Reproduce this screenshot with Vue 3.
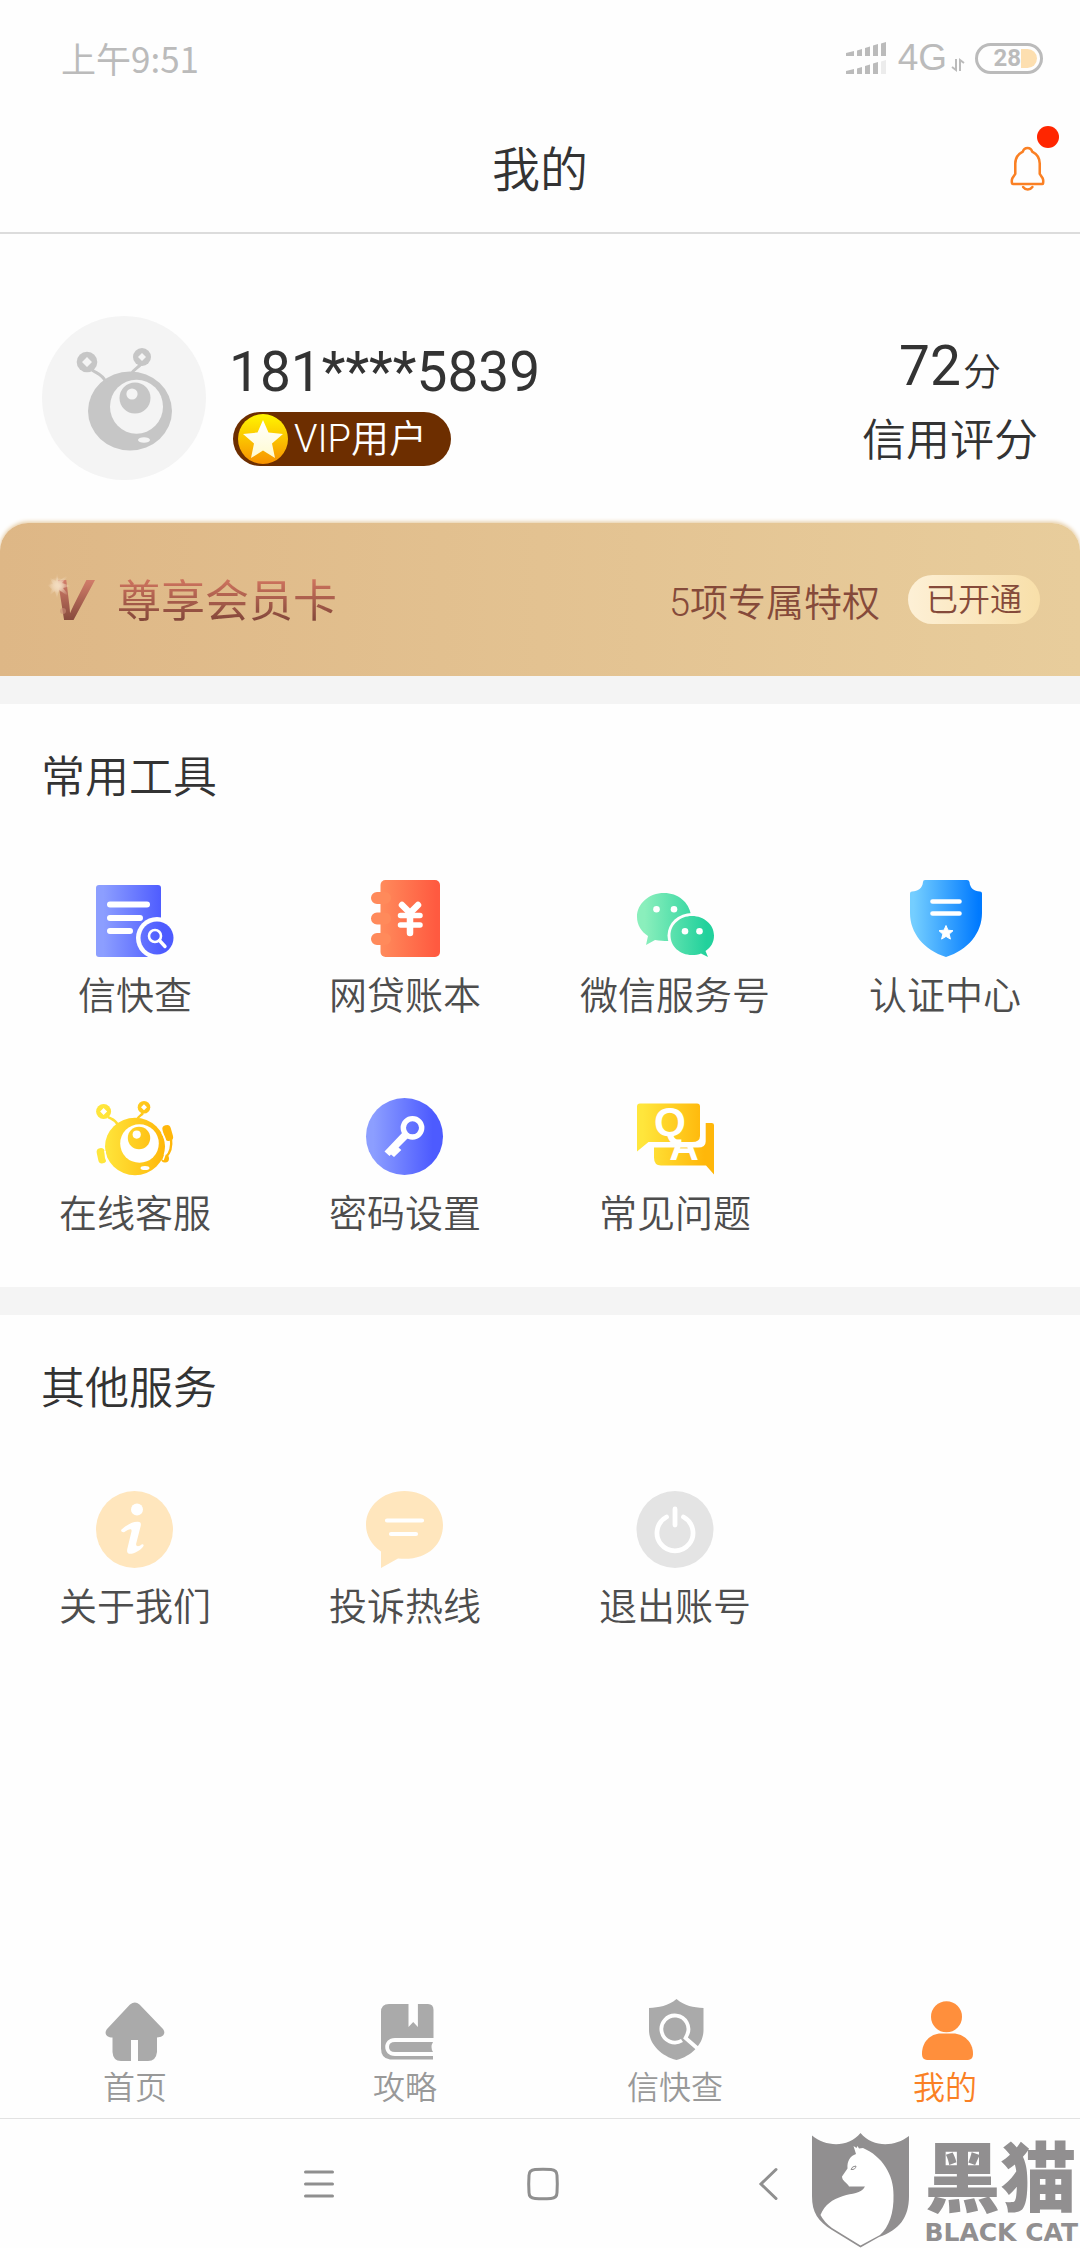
<script setup>
import { ref } from 'vue'

const account = '181****5839'
const score = 72
const activeTab = ref('mine')
</script>

<template>
  <div class="page">
    <div class="status">
      <span class="time">上午9:51</span>
      <div class="status-right">
        <svg class="signal" width="40" height="32" viewBox="0 0 40 32" fill="#bbb">
          <path d="M0 11l8-2v5H0zM11 8.500l5-1.500v7h-5zM19 6l5-1.500V14h-5zM27 3.500L32 2v12h-5zM35 1.500L40 0v14h-5z" />
          <path d="M0 29l8-2v5H0zM11 26.500l5-1.500v7h-5zM19 24l5-1.500V32h-5zM27 21.500L32 20v12h-5z" />
          <path d="M35 19.500l5-1.500v14h-5z" fill="#ececec" />
        </svg>
        <span class="net">4G</span>
        <svg class="updown" width="14" height="12" viewBox="0 0 14 12" fill="none" stroke="#bbb" stroke-width="2">
          <path d="M5 0v11L1 8M9 12V1l4 3" />
        </svg>
        <span class="battery"><b>28</b><i></i></span>
      </div>
    </div>

    <header class="header">
      <h1>我的</h1>
      <button class="bell" aria-label="消息">
        <svg width="36" height="45" viewBox="0 0 36 46" fill="none" stroke="#fa8024" stroke-width="2.600" stroke-linejoin="round" stroke-linecap="round">
          <path d="M17.500 2c-2.800 0-4.200 1.500-4.800 3.800C7.500 8.500 5 12.500 5 18v10.500L2 33c-.8 1.500-.7 3-.4 5 .1.600.5.800 1 .8h29.800c.5 0 .9-.2 1-.8.300-2 .4-3.500-.4-5l-3-4.500V18c0-5.500-2.500-9.500-7.700-12.200C21.700 3.500 20.300 2 17.500 2z" />
          <path d="M13 42c2.500 3.400 7 3.400 9.500 0" />
        </svg>
        <span class="dot"></span>
      </button>
    </header>

    <main class="main">
      <section class="profile">
        <svg class="avatar" width="164" height="164" viewBox="0 0 164 164">
          <circle cx="82" cy="82" r="82" fill="#f4f4f4" />
          <g fill="#c6c6c6">
            <ellipse cx="88" cy="95" rx="42" ry="39.500" />
            <circle cx="45" cy="46" r="10.300" />
            <circle cx="100" cy="41" r="9" />
            <path d="M50 54c6 4 10 4 14 12M99 48c-3 4-7 5-10 10" fill="none" stroke="#c6c6c6" stroke-width="3" />
          </g>
          <g fill="#f4f4f4">
            <path d="M45 41l5 5-5 5-5-5zM100 37l4 4-4 4-4-4z" />
            <ellipse cx="94.500" cy="90.700" rx="26.500" ry="27" />
            <ellipse cx="102" cy="124" rx="6" ry="2.800" />
          </g>
          <circle cx="93" cy="82" r="15.500" fill="#c6c6c6" />
          <circle cx="90" cy="78" r="5.600" fill="#f4f4f4" />
        </svg>
        <div class="who">
          <div class="phone">{{ account }}</div>
          <div class="vip">
            <svg width="50" height="50" viewBox="0 0 50 50">
              <defs>
                <linearGradient id="coin" x1="0" y1="0" x2="0" y2="1"><stop offset="0" stop-color="#fff600" /><stop offset="1" stop-color="#f79100" /></linearGradient>
                <linearGradient id="coinStar" x1="0" y1="0" x2="0" y2="1"><stop offset="0" stop-color="#fff" /><stop offset="1" stop-color="#fffbd0" /></linearGradient>
              </defs>
              <circle cx="25" cy="25" r="25" fill="url(#coin)" />
              <path d="M25 6l5.500 12.500L45 20 34 29.500 37 44 25 36.500 13 44l3-14.500L5 20l14.500-1.500z" fill="url(#coinStar)" />
            </svg>
            <span>VIP用户</span>
          </div>
        </div>
        <div class="score">
          <div class="score-num">{{ score }}<small>分</small></div>
          <div class="score-label">信用评分</div>
        </div>
      </section>

      <section class="card">
        <svg class="v-logo" width="56" height="54" viewBox="0 0 56 54">
          <defs>
            <linearGradient id="vFill" x1="0" y1="0" x2="0" y2="1"><stop offset="0.200" stop-color="#d07c69" /><stop offset="0.850" stop-color="#83473a" /></linearGradient>
            <radialGradient id="spark"><stop offset="0" stop-color="#f3dcc0" /><stop offset="1" stop-color="#f3dcc0" stop-opacity="0" /></radialGradient>
          </defs>
          <text x="8" y="47" class="v-mark" fill="url(#vFill)">V</text>
          <path d="M12 0l1.500 8L26 0 17 10l9 3-8 2 8 10-12-8-2 9-2-8-7 6 4-8-5-4 6-1-4-7 7 4z" fill="url(#spark)" />
          <circle cx="12" cy="12" r="8" fill="url(#spark)" />
          <circle cx="18" cy="38" r="3" fill="#c98d78" opacity="0.600" />
        </svg>
        <strong>尊享会员卡</strong>
        <span class="perks">5项专属特权</span>
        <button class="opened">已开通</button>
      </section>

      <section class="block">
        <h2>常用工具</h2>
        <div class="grid">
          <button class="tool">
            <svg width="78" height="78" viewBox="0 0 78 78">
              <defs><linearGradient id="g1" gradientUnits="userSpaceOnUse" x1="0" y1="0" x2="74" y2="0"><stop offset="0.100" stop-color="#8c9eff" /><stop offset="0.900" stop-color="#4d5bff" /></linearGradient></defs>
              <rect x="0" y="5" width="65" height="72" rx="3" fill="url(#g1)" />
              <path d="M14 24.500h37M14 38h30M14 51h20" stroke="#fff" stroke-width="6" stroke-linecap="round" />
              <circle cx="61" cy="58" r="21" fill="#fefefe" />
              <circle cx="61" cy="58" r="16.500" fill="url(#g1)" />
              <g fill="none" stroke="#fff" stroke-width="2.600" stroke-linecap="round"><circle cx="59" cy="56" r="6" /><path d="M63.500 60.500l5.500 6" stroke-width="3.400" /></g>
            </svg>
            <span>信快查</span>
          </button>
          <button class="tool">
            <svg width="78" height="78" viewBox="0 0 78 78">
              <defs><linearGradient id="g2" gradientUnits="userSpaceOnUse" x1="5" y1="0" x2="74" y2="0"><stop offset="0.150" stop-color="#ff8a5b" /><stop offset="0.950" stop-color="#ff5a40" /></linearGradient></defs>
              <rect x="14.500" y="0" width="59.500" height="77" rx="5" fill="url(#g2)" />
              <path d="M11 18h8M11 38.500h8M11 59h8" stroke="#ff8a5b" stroke-width="12" stroke-linecap="round" />
              <path d="M36 25l8 8 8-8M44 33v20" fill="none" stroke="#fff" stroke-width="6.500" stroke-linecap="round" />
              <path d="M34.500 35.500h19.500M34.500 45h19.500" stroke="#fff" stroke-width="5.500" stroke-linecap="round" />
            </svg>
            <span>网贷账本</span>
          </button>
          <button class="tool">
            <svg width="78" height="78" viewBox="1 0 78 78">
              <defs><linearGradient id="g3" gradientUnits="userSpaceOnUse" x1="2" y1="0" x2="79" y2="0"><stop offset="0.100" stop-color="#8aefbc" /><stop offset="0.900" stop-color="#22d19c" /></linearGradient></defs>
              <path d="M29 13C14 13 2 23.500 2 37c0 8 4.500 15 11 19l-2 9 9-5c13 2 20 1 24-1L56 35C54 22 43 13 29 13z" fill="url(#g3)" />
              <ellipse cx="57" cy="55.500" rx="24.500" ry="22.500" fill="#fefefe" />
              <path d="M57 36c-12 0-21.500 8.500-21.500 19.500S45 75 57 75c3.500 0 6.500-.5 9-1.500l7 3.500-2.500-6c5.500-3.500 8.500-9 8.500-15.500C79 44.500 69 36 57 36z" fill="url(#g3)" />
              <g fill="#fff"><circle cx="21.500" cy="29.300" r="3.300" /><circle cx="39" cy="29.300" r="3.300" /><circle cx="50" cy="51.300" r="3.300" /><circle cx="64.500" cy="51.300" r="3.300" /></g>
            </svg>
            <span>微信服务号</span>
          </button>
          <button class="tool">
            <svg width="78" height="78" viewBox="0 0 78 78">
              <defs><linearGradient id="g4" gradientUnits="userSpaceOnUse" x1="4" y1="0" x2="76" y2="0"><stop offset="0.050" stop-color="#74ceff" /><stop offset="0.950" stop-color="#007aff" /></linearGradient></defs>
              <path d="M19 0h42q2 0 2.500 2c.5 6 4.500 9.500 10.500 9.500q2 0 2 2V33c0 20-14 37-36 44C18 70 4 53 4 33V13.500q0-2 2-2c6 0 10.500-3.500 11-9.500q0-2 2-2z" fill="url(#g4)" />
              <path d="M26.500 21.500h27M26.500 33.500h27" stroke="#fff" stroke-width="4.600" stroke-linecap="round" />
              <path d="M40 45.500l2 4.700 5 .5-3.800 3.400 1.200 5-4.400-2.700-4.400 2.700 1.200-5-3.800-3.400 5-.5z" fill="#fff" stroke="#fff" />
            </svg>
            <span>认证中心</span>
          </button>
          <button class="tool">
            <svg width="78" height="78" viewBox="0 0 78 78">
              <defs><linearGradient id="g5" gradientUnits="userSpaceOnUse" x1="0" y1="0" x2="77" y2="0"><stop offset="0.100" stop-color="#ffe63c" /><stop offset="0.900" stop-color="#ffb70a" /></linearGradient></defs>
              <g fill="url(#g5)">
                <ellipse cx="39" cy="48.500" rx="30" ry="28.800" />
                <circle cx="7.600" cy="13.500" r="7.500" /><circle cx="48" cy="9.300" r="6.300" />
                <rect x="1.500" y="50" width="8" height="15.500" rx="4" transform="rotate(-12 5.500 58)" />
                <rect x="67.500" y="27" width="8.500" height="16" rx="4" transform="rotate(-16 71.700 35)" />
                <circle cx="69" cy="60.500" r="4" />
              </g>
              <path d="M12 19c3 2 7 2 10 8M47 15c-2 3-5 3-7 8M75 41c1 8-1 14-5 18" fill="none" stroke="url(#g5)" stroke-width="2.400" />
              <path d="M66 35c6 9 5 17 1 27M9 53c0 6 1 9 3 13" fill="none" stroke="#fff" stroke-width="1.600" />
              <g fill="#fff">
                <path d="M7.600 10l3.500 3.500-3.500 3.500-3.500-3.500zM48 6.300l3 3-3 3-3-3z" />
                <circle cx="43.500" cy="45.500" r="19.300" /><ellipse cx="49" cy="70" rx="4.500" ry="2" />
              </g>
              <circle cx="43" cy="40" r="11.200" fill="url(#g5)" /><circle cx="40.700" cy="36.600" r="4.100" fill="#fff" />
            </svg>
            <span>在线客服</span>
          </button>
          <button class="tool">
            <svg width="78" height="78" viewBox="0 0 78 78">
              <circle cx="38.500" cy="38.500" r="38.500" fill="url(#g1)" />
              <circle cx="46.500" cy="29.800" r="9.200" fill="none" stroke="#fff" stroke-width="5.400" />
              <path d="M36.500 34.500l5.500 5.500-9.500 9.500 2.800 2.500-7.300 7-3-2.500-1.500 1.500-5-4.500z" fill="#fff" />
            </svg>
            <span>密码设置</span>
          </button>
          <button class="tool">
            <svg width="78" height="78" viewBox="1 0 78 78">
              <defs><clipPath id="lower"><rect x="19" y="49" width="60" height="30" /></clipPath></defs>
              <path d="M5 5.500h57q3 0 3 3V38q0 6-8 6H13.500L2 53.500V8.500q0-3 3-3z" fill="url(#g5)" />
              <path d="M19 49.500h44q7.700 0 7.700-6V25h6q2.300 0 2.300 2v49.500l-8-9H26q-7 0-7-8z" fill="url(#g5)" />
              <text x="35" y="38" class="qa">Q</text>
              <text x="49" y="62" class="qa" clip-path="url(#lower)">A</text>
            </svg>
            <span>常见问题</span>
          </button>
        </div>
      </section>

      <section class="block">
        <h2>其他服务</h2>
        <div class="grid">
          <button class="tool">
            <svg width="78" height="78" viewBox="0 0 78 78">
              <circle cx="38.500" cy="38.500" r="38.500" fill="#ffe6bd" />
              <circle cx="41" cy="18.500" r="6" fill="#fff" />
              <path d="M25 39C31 33.500 38 30 43 31c2 .3 2 2 1.700 4l-4.500 17.500c-.7 3.500 2.800 3.500 5.800.8q2-.3 1.500 1.700C44 60 37 63.500 33 62.700c-2.500-.7-2-3.700-1.500-5.700l4-16.500c.5-3-2-3-7.500.8q-3 .2-3-2.300z" fill="#fff" />
            </svg>
            <span>关于我们</span>
          </button>
          <button class="tool">
            <svg width="78" height="78" viewBox="0 0 78 78">
              <path d="M38.500 0C17 0 0 15 0 34c0 11 6 20 15 26.500V77l17-9.500c28 3 45-13 45-33.500C77 15 60 0 38.500 0z" fill="#ffe6bd" />
              <path d="M21 29.500h35M25 43h25" stroke="#fff" stroke-width="4.200" stroke-linecap="round" />
            </svg>
            <span>投诉热线</span>
          </button>
          <button class="tool">
            <svg width="78" height="78" viewBox="0 0 78 78">
              <circle cx="39" cy="38.500" r="38.500" fill="#e4e4e4" />
              <path d="M30.500 26a18 18 0 1 0 17 0M39 18v16" fill="none" stroke="#fff" stroke-width="4.800" stroke-linecap="round" />
            </svg>
            <span>退出账号</span>
          </button>
        </div>
      </section>
    </main>

    <nav class="tabs">
      <a href="#home" :class="{ on: activeTab === 'home' }">
        <svg width="60" height="60" viewBox="0 0 60 60" fill="#aaa">
          <path d="M25 3.500q5-4 9.500 0L58 28c3.500 5-.5 8.500-6 8.500V51q-1 9-9 9H33V39h-7v21H16q-8 0-8.500-9V36.500C2 36.500-1.500 33 2 28z" />
        </svg>
        <span>首页</span>
      </a>
      <a href="#guide" :class="{ on: activeTab === 'guide' }">
        <svg width="60" height="60" viewBox="0 0 60 60" fill="#aaa">
          <path d="M14 3h19.500v23l4.700-5 4.700 5V3H53q5.500 0 5.500 6v28H20c-13 0-13 18 0 18h38v3.500H15q-9-1-9-11V11q0-8 8-8z" />
          <path d="M20 41h38q-3 5 0 10H20q-6 0-6-5t6-5z" />
        </svg>
        <span>攻略</span>
      </a>
      <a href="#check" :class="{ on: activeTab === 'check' }">
        <svg width="60" height="60" viewBox="0 0 60 60" fill="#aaa">
          <path d="M31.500-2C23 5 14 6.500 4 7v22c0 14 12 26 27.500 30C47 55 58.500 43 58.500 29V7C48 6.500 40 5 31.500-2z" />
          <path d="M37 39.500A13.500 13.500 0 1 1 42 34l-1.500 3L52 47" fill="none" stroke="#fff" stroke-width="3.800" />
        </svg>
        <span>信快查</span>
      </a>
      <a href="#mine" :class="{ on: activeTab === 'mine' }">
        <svg width="60" height="60" viewBox="0 0 60 60" fill="#ff8f3c">
          <circle cx="31.500" cy="15.800" r="15.500" />
          <path d="M26 32.500h12c11 0 20 9 20 20 0 5-2 6.500-7 6.500H14c-5 0-7-1.500-7-6.500 0-11 8-20 19-20z" />
        </svg>
        <span>我的</span>
      </a>
    </nav>

    <div class="sysnav">
      <button aria-label="菜单">
        <svg width="32" height="32" viewBox="0 0 32 32" fill="none" stroke="#8f8f8f" stroke-width="3" stroke-linecap="round"><path d="M2.500 4h27M2.500 16h27M2.500 28h27" /></svg>
      </button>
      <button aria-label="主页">
        <svg width="32" height="32" viewBox="0 0 32 32" fill="none" stroke="#8f8f8f" stroke-width="3"><path d="M8 1.500Q16 1 24 1.500q6 .5 6 6 .6 8.500 0 17 0 5.500-6 6-8 .5-16 0-6-.5-6-6-.6-8.500 0-17 0-5.500 6-6z" /></svg>
      </button>
      <button aria-label="返回">
        <svg width="32" height="32" viewBox="0 0 32 32" fill="none" stroke="#8f8f8f" stroke-width="3" stroke-linecap="round"><path d="M25 1.500L10 16l15 14.500" /></svg>
      </button>
      <div class="mark">
        <svg width="97" height="115" viewBox="0 0 97 115">
          <path d="M0 2.500C14 14 36 15 48.500 0 61 15 83 14 97 3v60c0 22-10 34-30 41l-18.500 10.500L20 97C6 88 0 80 0 63z" fill="#918f90" />
          <path d="M41.500 13l3 2 1-2 1.500 2.500 4-.5C70 23 82 42 81.500 62 82 80 77 94 68 102l-19.500 10.500L20 95Q12 89 8.500 82C13 71 20 67 31 63c9-3 18-2 22-9.500H37c-2-4-7-5.500-7-10l5.500-8C35 28 38 23 44 21z" fill="#fff" />
          <path d="M39 36.500q1-3.500 5-3.500-.5 4-5 3.500z" fill="none" stroke="#918f90" />
        </svg>
        <div class="mark-text">
          <span class="mark-cn">黑猫</span>
          <span class="mark-en">BLACK CAT</span>
        </div>
      </div>
    </div>
  </div>
</template>

<style>
body {
  margin: 0;
  background: #fefefe;
}
</style>

<style scoped>
.page {
  min-height: 100vh;
  display: flex;
  flex-direction: column;
  color: #333;
  font-family: Roboto, "Noto Sans CJK SC", sans-serif;
  font-weight: 350;
}
button {
  border: 0;
  padding: 0;
  background: none;
  color: inherit;
  font: inherit;
}
svg {
  display: block;
  overflow: visible;
  flex: none;
}
.status {
  display: flex;
  justify-content: space-between;
  align-items: center;
  padding: 34px 37px 0 61px;
  height: 48px;
  color: #bbb;
}
.time {
  font: 400 35px/46px "Noto Sans CJK SC", sans-serif;
}
.status-right {
  display: flex;
  align-items: center;
}
.net {
  margin-left: 12px;
  font: 400 37px/40px "Liberation Sans", sans-serif;
}
.updown {
  align-self: flex-end;
  margin: 0 10px 7px 4px;
}
.battery {
  display: flex;
  align-items: center;
  justify-content: flex-end;
  box-sizing: border-box;
  width: 68px;
  height: 31px;
  padding-right: 3px;
  border: 3px solid #bbb;
  border-radius: 16px;
}
.battery b {
  font: 700 24px/25px Roboto, sans-serif;
}
.battery i {
  width: 16px;
  height: 19px;
  background: #fddfb0;
  border-radius: 0 10px 10px 0;
}
.header {
  position: relative;
  display: flex;
  justify-content: center;
  align-items: flex-end;
  height: 132px;
  margin-top: 18px;
  border-bottom: 2px solid #dcdcdc;
}
h1 {
  margin: 0 0 25px;
  font-size: 48px;
  line-height: 72px;
  font-weight: 350;
}
.bell {
  position: absolute;
  right: 34px;
  top: 46px;
}
.dot {
  position: absolute;
  right: -13px;
  top: -20px;
  width: 22px;
  height: 22px;
  border-radius: 50%;
  background: #ff2600;
}
.main {
  flex: 1;
}
.profile {
  display: flex;
  align-items: flex-start;
  padding: 82px 42px 43px;
}
.who {
  margin-left: 23px;
  padding-top: 23px;
}
.phone {
  font-size: 55px;
  line-height: 66px;
  font-weight: 400;
}
.vip {
  display: flex;
  align-items: center;
  box-sizing: border-box;
  width: 218px;
  height: 54px;
  margin: 7px 0 0 4px;
  padding-left: 5px;
  gap: 6px;
  border-radius: 27px;
  background: #6d2e00;
  color: #fff;
  font-size: 38px;
  line-height: 54px;
}
.score {
  margin-left: auto;
  padding-top: 17px;
  text-align: center;
}
.score-num {
  font-size: 55px;
  line-height: 66px;
  font-weight: 400;
}
.score-num small {
  margin-left: 2px;
  font-size: 38px;
  font-weight: 350;
}
.score-label {
  margin-top: 4px;
  font-size: 44px;
  line-height: 64px;
}
.card {
  display: flex;
  align-items: center;
  box-sizing: border-box;
  height: 153px;
  padding: 0 40px 0 45px;
  border-radius: 28px 28px 0 0;
  background: linear-gradient(90deg, #deb786, #e8cd9c);
  box-shadow: 0 -1px 4px #e3c596;
  color: #854a3a;
}
.v-mark {
  font: italic 700 57px "Liberation Sans", sans-serif;
}
.card strong {
  margin-left: 16px;
  padding-top: 4px;
  font-size: 44px;
  line-height: 60px;
  font-weight: 400;
  background: linear-gradient(180deg, #cc725d 20%, #804538 85%);
  background-clip: text;
  -webkit-background-clip: text;
  color: transparent;
}
.perks {
  margin-left: auto;
  padding-top: 6px;
  font-size: 38px;
  line-height: 56px;
}
.opened {
  width: 132px;
  height: 49px;
  margin-left: 28px;
  border-radius: 25px;
  background: linear-gradient(90deg, #fdf0d6, #f8dfa9);
  font-size: 32px;
  line-height: 46px;
}
.block {
  border-top: 28px solid #f4f4f4;
  padding: 40px 0 46px;
}
h2 {
  margin: 0 0 68px;
  padding-left: 41px;
  font-size: 44px;
  line-height: 68px;
  font-weight: 350;
}
.grid {
  display: grid;
  grid-template-columns: repeat(4, 1fr);
  row-gap: 75px;
}
.tool {
  display: flex;
  flex-direction: column;
  align-items: center;
  gap: 11px;
  color: #4d4d4d;
  font-size: 38px;
  line-height: 54px;
}
.qa {
  font: 700 41px "Liberation Sans", sans-serif;
  fill: #fff;
  text-anchor: middle;
}
.tabs {
  display: grid;
  grid-template-columns: repeat(4, 1fr);
  padding-bottom: 9px;
}
.tabs a {
  display: flex;
  flex-direction: column;
  align-items: center;
  gap: 6px;
  color: #999;
  font-size: 32px;
  line-height: 42px;
  text-decoration: none;
}
.tabs a.on {
  color: #fa8024;
}
.sysnav {
  position: relative;
  display: flex;
  justify-content: center;
  align-items: center;
  gap: 192px;
  height: 129px;
  padding-left: 6px;
  border-top: 1px solid #e2e2e2;
}
.mark {
  position: absolute;
  right: 2px;
  bottom: 0;
  display: flex;
  gap: 15px;
  color: #918f90;
}
.mark-text {
  display: flex;
  flex-direction: column;
  gap: 6px;
}
.mark-cn {
  font: 900 76px/80px "Noto Sans CJK SC", sans-serif;
}
.mark-en {
  font: 700 25px/28px "DejaVu Sans", sans-serif;
  white-space: nowrap;
}
</style>
